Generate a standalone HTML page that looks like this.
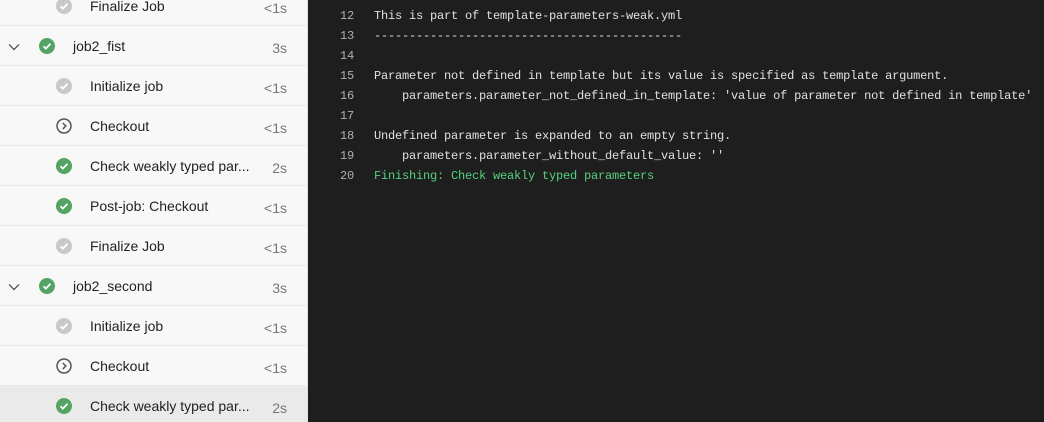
<!DOCTYPE html>
<html><head><style>
*{margin:0;padding:0;box-sizing:border-box}
body{width:1044px;height:422px;overflow:hidden;background:#1e1e1e;position:relative;font-family:"Liberation Sans",sans-serif}
#side{position:absolute;left:0;top:0;width:308px;height:422px;background:#f8f8f8;border-right:1px solid #e0e0e0;overflow:hidden}
.row{position:absolute;left:0;width:307px;height:40px;border-bottom:1px solid #e8e8e8}
.row.sel{background:#eaeaea}
.t{position:absolute;top:12px;font-size:14px;color:#222}
.d{position:absolute;right:20px;top:14px;font-size:14px;color:#767676}
.ic{position:absolute;top:12px}
.chev{position:absolute;left:8px;top:15px}
#log{position:absolute;left:308px;top:6px;font-family:"Liberation Mono",monospace;font-size:12px;letter-spacing:-0.2px;line-height:20px;color:#e0e0e0;white-space:pre}
.ln{display:inline-block;width:46px;text-align:right;color:#b0b0b0;margin-right:20px}
.g{color:#57d07f}
</style></head><body>
<div id="side">
<svg width="0" height="0" style="position:absolute"><defs>
<symbol id="ok" viewBox="0 0 16 16"><circle cx="8" cy="8" r="8" fill="#55a362"/><path d="M4.5 8.3l2.3 2.3 4.7-4.8" stroke="#fff" stroke-width="1.8" fill="none"/></symbol>
<symbol id="sk" viewBox="0 0 16 16"><circle cx="8" cy="8" r="8" fill="#c8c8c8"/><path d="M4.5 8.3l2.3 2.3 4.7-4.8" stroke="#fff" stroke-width="1.8" fill="none"/></symbol>
<symbol id="ar" viewBox="0 0 16 16"><circle cx="8" cy="8" r="7" fill="none" stroke="#555" stroke-width="1.5"/><path d="M6.8 5l3 3-3 3" stroke="#555" stroke-width="1.5" fill="none"/></symbol>
<symbol id="cv" viewBox="0 0 12 12"><path d="M1 3.5l5 5 5-5" stroke="#444" stroke-width="1.2" fill="none"/></symbol>
</defs></svg>
<div class="row" style="top:-14px"><svg class="ic" style="left:56px" width="16" height="16"><use href="#sk"/></svg><span class="t" style="left:90px">Finalize Job</span><span class="d">&lt;1s</span></div>
<div class="row" style="top:26px"><svg class="chev" width="12" height="12"><use href="#cv"/></svg><svg class="ic" style="left:39px" width="16" height="16"><use href="#ok"/></svg><span class="t" style="left:73px">job2_fist</span><span class="d">3s</span></div>
<div class="row" style="top:66px"><svg class="ic" style="left:56px" width="16" height="16"><use href="#sk"/></svg><span class="t" style="left:90px">Initialize job</span><span class="d">&lt;1s</span></div>
<div class="row" style="top:106px"><svg class="ic" style="left:56px" width="16" height="16"><use href="#ar"/></svg><span class="t" style="left:90px">Checkout</span><span class="d">&lt;1s</span></div>
<div class="row" style="top:146px"><svg class="ic" style="left:56px" width="16" height="16"><use href="#ok"/></svg><span class="t" style="left:90px">Check weakly typed par...</span><span class="d">2s</span></div>
<div class="row" style="top:186px"><svg class="ic" style="left:56px" width="16" height="16"><use href="#ok"/></svg><span class="t" style="left:90px">Post-job: Checkout</span><span class="d">&lt;1s</span></div>
<div class="row" style="top:226px"><svg class="ic" style="left:56px" width="16" height="16"><use href="#sk"/></svg><span class="t" style="left:90px">Finalize Job</span><span class="d">&lt;1s</span></div>
<div class="row" style="top:266px"><svg class="chev" width="12" height="12"><use href="#cv"/></svg><svg class="ic" style="left:39px" width="16" height="16"><use href="#ok"/></svg><span class="t" style="left:73px">job2_second</span><span class="d">3s</span></div>
<div class="row" style="top:306px"><svg class="ic" style="left:56px" width="16" height="16"><use href="#sk"/></svg><span class="t" style="left:90px">Initialize job</span><span class="d">&lt;1s</span></div>
<div class="row" style="top:346px"><svg class="ic" style="left:56px" width="16" height="16"><use href="#ar"/></svg><span class="t" style="left:90px">Checkout</span><span class="d">&lt;1s</span></div>
<div class="row sel" style="top:386px"><svg class="ic" style="left:56px" width="16" height="16"><use href="#ok"/></svg><span class="t" style="left:90px">Check weakly typed par...</span><span class="d">2s</span></div>
</div>
<div id="log"><span class="ln">12</span>This is part of template-parameters-weak.yml
<span class="ln">13</span>--------------------------------------------
<span class="ln">14</span>
<span class="ln">15</span>Parameter not defined in template but its value is specified as template argument.
<span class="ln">16</span>    parameters.parameter_not_defined_in_template: 'value of parameter not defined in template'
<span class="ln">17</span>
<span class="ln">18</span>Undefined parameter is expanded to an empty string.
<span class="ln">19</span>    parameters.parameter_without_default_value: ''
<span class="ln">20</span><span class="g">Finishing: Check weakly typed parameters</span></div>
</body></html>
